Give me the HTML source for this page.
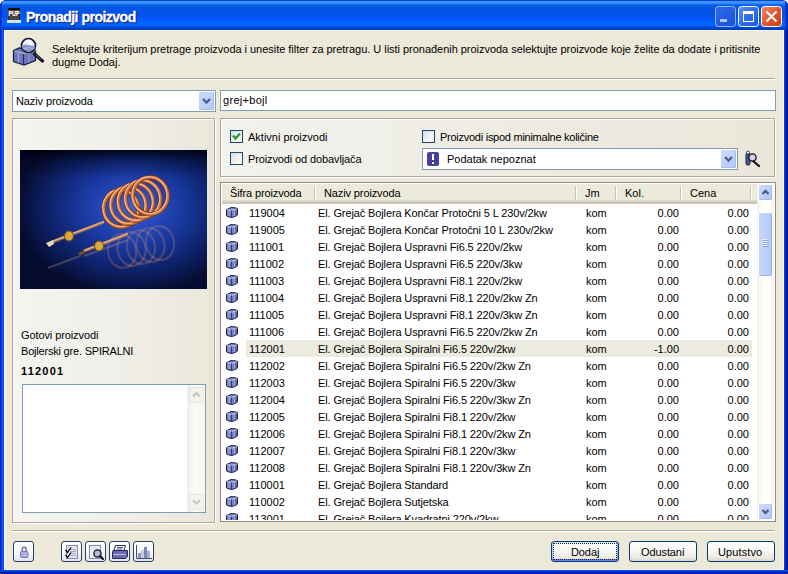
<!DOCTYPE html>
<html><head><meta charset="utf-8">
<style>
*{margin:0;padding:0;box-sizing:border-box}
html,body{width:788px;height:574px;overflow:hidden;background:#fff}
body{font-family:"Liberation Sans",sans-serif;font-size:11px;color:#000;position:relative}
.a{position:absolute}
.t{position:absolute;white-space:nowrap;line-height:13px;font-size:11px}
#win{left:0;top:0;width:788px;height:574px;background:#0842D8;border-radius:6px 6px 0 0;overflow:hidden}
#title{left:0;top:0;width:788px;height:30px;
 background:linear-gradient(to bottom,#0A3FD0 0px,#0A3FD0 1px,#3D95FF 1px,#3D95FF 3px,#0A5FE8 5px,#0055E5 10px,#0851F0 17px,#0062FF 21px,#0066FF 25px,#0050E0 27px,#003DC0 29px,#003AB0 30px)}
#lb{left:0;top:30px;width:4px;height:544px;background:linear-gradient(to right,#0020D0 0,#0020D0 1px,#0838E0 1px,#0838E0 2px,#1060F0 2px,#1060F0 3px,#0848E8 3px)}
#rb{left:784px;top:30px;width:4px;height:544px;background:linear-gradient(to right,#0840E0 0,#0840E0 1px,#0030D0 1px,#0030D0 2px,#0018A0 2px)}
#bb{left:0;top:570px;width:788px;height:4px;background:linear-gradient(to bottom,#0848E8 0,#0848E8 1px,#0838D8 1px,#0838D8 2px,#0020B0 2px)}
#client{left:4px;top:30px;width:780px;height:540px;background:#ECE9D8;border:1px solid #F6F8FC}
.hdr{background:linear-gradient(to bottom,#EBEADB 0,#EBEADB 16px,#E2DECD 16px,#E2DECD 17px,#D6D2C2 17px,#D6D2C2 18px,#CBC7B8 18px)}
.sbtn{border-radius:2px;border:1px solid #FFFFFF;background:linear-gradient(135deg,#CCDAFC 0%,#C0D2FB 50%,#AEC6F8 100%);box-shadow:inset -1px -1px 0 #A6BCEB}
.sthumb{border-radius:2px;border:1px solid #FFFFFF;background:linear-gradient(to right,#C6D6FC,#BDD0FC 50%,#B2C8FA);box-shadow:inset -1px -1px 0 #9CB4EC}
.cb{position:absolute;width:13px;height:13px;border:1px solid #23466A;background:linear-gradient(135deg,#D2DAE6 0%,#EEF0F0 50%,#FFFAF2 100%)}
.btn{position:absolute;height:21px;border:1px solid #003C74;border-radius:3px;background:linear-gradient(to bottom,#FFFFFF 0%,#F6F6F2 50%,#EAE8E0 85%,#D8D2C6 100%)}
.ibtn{position:absolute;width:21px;height:21px;border:1px solid #2B3F5C;border-radius:3px;background:linear-gradient(to bottom,#FFFFFF,#F4F6FA 60%,#DCE6F4)}
.box{position:absolute;border:1px solid #7F9DB9;background:#fff}
</style></head><body>
<div id="win" class="a">
 <div id="title" class="a"></div>
 <div class="a" style="left:0;top:0;width:2px;height:30px;background:linear-gradient(to right,#0028C8,#0848E0)"></div>
 <div class="a" style="left:785px;top:0;width:3px;height:30px;background:linear-gradient(to right,#0848E0,#0020A8)"></div>
 <div id="lb" class="a"></div><div id="rb" class="a"></div><div id="bb" class="a"></div>
 <div id="client" class="a"></div>
</div>
<!-- title -->
<div class="t" style="left:27px;top:10px;font-weight:bold;font-size:14px;letter-spacing:-0.5px;line-height:16px;color:#0A1A6A;-webkit-text-stroke:0.3px #0A1A6A">Pronadji proizvod</div>
<div class="t" style="left:26px;top:9px;font-weight:bold;font-size:14px;letter-spacing:-0.5px;line-height:16px;color:#fff;-webkit-text-stroke:0.3px #fff">Pronadji proizvod</div>
<svg class="a" style="left:0;top:0" width="788" height="30">
 <rect x="8" y="8" width="12" height="13" fill="#2A2622"/>
 <rect x="8" y="8" width="12" height="2" fill="#140C08"/>
 <text x="14" y="15.5" font-family="Liberation Sans" font-weight="bold" font-size="6.5" fill="#fff" text-anchor="middle" stroke="#fff" stroke-width="0.3" textLength="11" lengthAdjust="spacingAndGlyphs">PUP</text>
 <rect x="9" y="16" width="10" height="4" fill="#4A4642"/>
 <rect x="7" y="20" width="14" height="3" fill="#CFE0F8"/>
 <rect x="715.5" y="6.5" width="20" height="20" rx="3" fill="url(#gmin)" stroke="#FFFFFF" stroke-opacity="0.55"/>
 <rect x="720" y="19" width="7" height="3" fill="#A9C4F4"/>
 <rect x="738.5" y="6.5" width="20" height="20" rx="3" fill="url(#gmax)" stroke="#FFFFFF"/>
 <rect x="743.5" y="11.5" width="10" height="10" fill="none" stroke="#fff"/>
 <rect x="743" y="11" width="11" height="3" fill="#fff"/>
 <rect x="761.5" y="6.5" width="20" height="20" rx="3" fill="url(#gcls)" stroke="#FFFFFF"/>
 <path d="M766.5 11.5 L776.5 21.5 M776.5 11.5 L766.5 21.5" stroke="#fff" stroke-width="2"/>
 <defs>
  <linearGradient id="gmin" x1="0" y1="0" x2="1" y2="1"><stop offset="0" stop-color="#2E6BF0"/><stop offset="1" stop-color="#1850D8"/></linearGradient>
  <linearGradient id="gmax" x1="0" y1="0" x2="1" y2="1"><stop offset="0" stop-color="#5A8FF8"/><stop offset="0.5" stop-color="#2E6CF2"/><stop offset="1" stop-color="#1E58E0"/></linearGradient>
  <linearGradient id="gcls" x1="0" y1="0" x2="1" y2="1"><stop offset="0" stop-color="#F08A66"/><stop offset="0.5" stop-color="#E2582E"/><stop offset="1" stop-color="#C43E18"/></linearGradient>
 </defs>
</svg>
<!-- info -->
<svg class="a" style="left:8px;top:34px" width="40" height="36" viewBox="8 34 40 36">
 <path d="M13.5 50.5 L19 48 L24 48.5 L35.5 51 L35.5 60.5 L24 65 L13.5 61.5 Z" fill="#6E76B8" stroke="#1A2048" stroke-width="1.3"/>
 <path d="M14.5 51 L23.5 53.5 L34.5 51" fill="none" stroke="#B4BCE6" stroke-width="1.2"/>
 <path d="M23.5 54 L23.5 64.5" stroke="#242C66" stroke-width="1.2"/>
 <path d="M18.5 52.5 L18.5 62.5" stroke="#9CA6DA" stroke-width="1.3"/>
 <path d="M29 53 L29 62.5" stroke="#8A94CC" stroke-width="1.3"/>
 <path d="M34.5 54 L42.5 61" stroke="#10121E" stroke-width="3.2" stroke-linecap="round"/>
 <path d="M35.5 54.5 L41.5 59.8" stroke="#6A7090" stroke-width="0.9"/>
 <circle cx="28.5" cy="45.5" r="7" fill="#F2F4FC" stroke="#141830" stroke-width="1.7"/>
 <path d="M21.8 46 Q25 43.5 28.5 45 Q32 46.5 35.2 45 L34.6 48.5 Q28.5 54.5 22.4 48.5 Z" fill="#8C96CC"/>
 <path d="M23 48.8 Q28.5 46.5 34 48.8" fill="none" stroke="#B8C0E8" stroke-width="0.8"/>
</svg>
<div class="t" style="left:52px;top:43px;letter-spacing:-0.03px">Selektujte kriterijum pretrage proizvoda i unesite filter za pretragu. U listi pronađenih proizvoda selektujte proizvode koje želite da dodate i pritisnite</div>
<div class="t" style="left:52px;top:56px;">dugme Dodaj.</div>
<div class="a" style="left:12px;top:78px;width:763px;height:1px;background:#ACA899"></div>
<div class="a" style="left:12px;top:79px;width:763px;height:1px;background:#fff"></div>
<!-- combo 1 -->
<div class="box" style="left:12px;top:90px;width:204px;height:22px"></div>
<div class="t" style="left:16px;top:95px;letter-spacing:-0.1px">Naziv proizvoda</div>
<div class="a sbtn" style="left:198px;top:91px;width:17px;height:20px"></div><svg class="a" style="left:0;top:0" width="788" height="574"><path d="M203.0 99.0 L206.5 102.5 L210.0 99.0" fill="none" stroke="#4D6185" stroke-width="2.4"/></svg>
<!-- text input -->
<div class="box" style="left:220px;top:90px;width:556px;height:21px"></div>
<div class="t" style="left:223px;top:94px;letter-spacing:0.3px">grej+bojl</div>
<!-- left panel -->
<div class="a" style="left:12px;top:118px;width:203px;height:405px;border:1px solid #ACA899;box-shadow:1px 1px 0 #FFFFFF,inset 1px 1px 0 #FFFFFF;background:linear-gradient(to right,#F4F4F1 0%,#F0EFE9 50%,#EAE7DA 100%)"></div>
<svg class="a" style="left:20px;top:150px" width="187" height="139" viewBox="0 0 187 139">
 <defs>
  <radialGradient id="bg" cx="0.6" cy="0.42" r="0.62"><stop offset="0" stop-color="#3464DC"/><stop offset="0.25" stop-color="#2448BC"/><stop offset="0.55" stop-color="#14308C"/><stop offset="0.85" stop-color="#0A1850"/><stop offset="1" stop-color="#060C30"/></radialGradient>
  <linearGradient id="topdark" x1="0" y1="0" x2="0" y2="1"><stop offset="0" stop-color="#000010" stop-opacity="0.85"/><stop offset="0.08" stop-color="#000010" stop-opacity="0.3"/><stop offset="0.2" stop-color="#000010" stop-opacity="0"/></linearGradient>
 </defs>
 <rect width="187" height="139" fill="url(#bg)"/>
 <rect width="187" height="139" fill="url(#topdark)"/>
 <g><ellipse cx="102.0" cy="101.0" rx="14" ry="17" transform="rotate(-10 102.0 101.0)" fill="none" stroke="#D89070" stroke-opacity="0.26" stroke-width="2.2"/><ellipse cx="111.5" cy="99.0" rx="14" ry="17" transform="rotate(-10 111.5 99.0)" fill="none" stroke="#D89070" stroke-opacity="0.26" stroke-width="2.2"/><ellipse cx="121.0" cy="97.0" rx="14" ry="17" transform="rotate(-10 121.0 97.0)" fill="none" stroke="#D89070" stroke-opacity="0.26" stroke-width="2.2"/><ellipse cx="130.5" cy="95.0" rx="14" ry="17" transform="rotate(-10 130.5 95.0)" fill="none" stroke="#D89070" stroke-opacity="0.26" stroke-width="2.2"/><ellipse cx="140.0" cy="93.0" rx="14" ry="17" transform="rotate(-10 140.0 93.0)" fill="none" stroke="#D89070" stroke-opacity="0.26" stroke-width="2.2"/></g>
 <path d="M64 106 L108 90" stroke="#C0907A" stroke-opacity="0.35" stroke-width="2"/>
 <path d="M28 118 L60 106" stroke="#B0A080" stroke-opacity="0.3" stroke-width="2"/>
 <path d="M84 72 L32 92" stroke="#A87050" stroke-width="3"/>
 <path d="M84 71.5 L32 91.5" stroke="#E8C0A0" stroke-width="1.2"/>
 <path d="M108 84 L64 101" stroke="#A87050" stroke-width="3"/>
 <path d="M108 83.5 L64 100.5" stroke="#E8C0A0" stroke-width="1.2"/>
 <g><ellipse cx="101.0" cy="58.5" rx="17.5" ry="18.5" transform="rotate(-8 101.0 58.5)" fill="none" stroke="#7A3818" stroke-width="4.4"/><ellipse cx="101.0" cy="58.5" rx="17.5" ry="18.5" transform="rotate(-8 101.0 58.5)" fill="none" stroke="#CC7040" stroke-width="3.0"/><ellipse cx="100.4" cy="57.9" rx="17.5" ry="18.5" transform="rotate(-8 101.0 58.5)" fill="none" stroke="#F8C098" stroke-width="1.1"/><ellipse cx="108.3" cy="55.3" rx="17.5" ry="18.5" transform="rotate(-8 108.3 55.3)" fill="none" stroke="#7A3818" stroke-width="4.4"/><ellipse cx="108.3" cy="55.3" rx="17.5" ry="18.5" transform="rotate(-8 108.3 55.3)" fill="none" stroke="#CC7040" stroke-width="3.0"/><ellipse cx="107.7" cy="54.7" rx="17.5" ry="18.5" transform="rotate(-8 108.3 55.3)" fill="none" stroke="#F8C098" stroke-width="1.1"/><ellipse cx="115.6" cy="52.1" rx="17.5" ry="18.5" transform="rotate(-8 115.6 52.1)" fill="none" stroke="#7A3818" stroke-width="4.4"/><ellipse cx="115.6" cy="52.1" rx="17.5" ry="18.5" transform="rotate(-8 115.6 52.1)" fill="none" stroke="#CC7040" stroke-width="3.0"/><ellipse cx="115.0" cy="51.5" rx="17.5" ry="18.5" transform="rotate(-8 115.6 52.1)" fill="none" stroke="#F8C098" stroke-width="1.1"/><ellipse cx="122.9" cy="48.9" rx="17.5" ry="18.5" transform="rotate(-8 122.9 48.9)" fill="none" stroke="#7A3818" stroke-width="4.4"/><ellipse cx="122.9" cy="48.9" rx="17.5" ry="18.5" transform="rotate(-8 122.9 48.9)" fill="none" stroke="#CC7040" stroke-width="3.0"/><ellipse cx="122.3" cy="48.3" rx="17.5" ry="18.5" transform="rotate(-8 122.9 48.9)" fill="none" stroke="#F8C098" stroke-width="1.1"/><ellipse cx="130.2" cy="45.7" rx="17.5" ry="18.5" transform="rotate(-8 130.2 45.7)" fill="none" stroke="#7A3818" stroke-width="4.4"/><ellipse cx="130.2" cy="45.7" rx="17.5" ry="18.5" transform="rotate(-8 130.2 45.7)" fill="none" stroke="#CC7040" stroke-width="3.0"/><ellipse cx="129.6" cy="45.1" rx="17.5" ry="18.5" transform="rotate(-8 130.2 45.7)" fill="none" stroke="#F8C098" stroke-width="1.1"/></g>
 <ellipse cx="49" cy="86" rx="4.5" ry="5" fill="#D8A838" stroke="#705018"/>
 <ellipse cx="79" cy="96" rx="4.5" ry="5" fill="#D8A838" stroke="#705018"/>
 <path d="M33 90 L26 93 L29 97 L34 94Z" fill="#E8D8B8"/>
 <path d="M64 100 L58 103 L60 106 L65 103Z" fill="#6A5030"/>
</svg>
<div class="t" style="left:21px;top:329px;letter-spacing:-0.1px">Gotovi proizvodi</div>
<div class="t" style="left:21px;top:345px;letter-spacing:-0.2px">Bojlerski gre. SPIRALNI</div>
<div class="t" style="left:21px;top:365px;font-weight:bold;letter-spacing:1.2px">112001</div>
<div class="box" style="left:22px;top:384px;width:184px;height:129px"></div>
<div class="a" style="left:187px;top:385px;width:18px;height:127px;background:linear-gradient(to right,#EEEDE6,#FBFBF8 40%,#F6F5F0)"></div>
<div class="a" style="left:189px;top:387px;width:15px;height:16px;border:1px solid #E6E4DC;border-radius:2px;background:#F4F3EE"></div>
<div class="a" style="left:189px;top:494px;width:15px;height:16px;border:1px solid #E6E4DC;border-radius:2px;background:#F4F3EE"></div>
<svg class="a" style="left:0;top:0" width="788" height="574"><path d="M193 396.5 L196.5 393 L200 396.5" fill="none" stroke="#C8C6BC" stroke-width="2.2"/><path d="M193 500 L196.5 503.5 L200 500" fill="none" stroke="#C8C6BC" stroke-width="2.2"/></svg>
<!-- filter panel -->
<div class="a" style="left:220px;top:118px;width:555px;height:59px;border:1px solid #ACA899;box-shadow:1px 1px 0 #FFFFFF,inset 1px 1px 0 #FFFFFF;background:linear-gradient(to right,#F2F2EE,#EEECE3 50%,#EAE7DA)"></div>
<div class="cb" style="left:230px;top:130px"></div>
<svg class="a" style="left:0;top:0" width="788" height="574"><path d="M233 135.5 L235.5 138.5 L240 133.5" fill="none" stroke="#21A121" stroke-width="2.2"/></svg>
<div class="t" style="left:248px;top:131px;">Aktivni proizvodi</div>
<div class="cb" style="left:230px;top:152px"></div>
<div class="t" style="left:248px;top:153px;letter-spacing:-0.12px">Proizvodi od dobavljača</div>
<div class="cb" style="left:422px;top:130px"></div>
<div class="t" style="left:440px;top:131px;letter-spacing:-0.26px">Proizvodi ispod minimalne količine</div>
<div class="box" style="left:422px;top:148px;width:316px;height:22px"></div>
<svg class="a" style="left:0;top:0" width="788" height="574"><rect x="427" y="152" width="12" height="14" rx="2" fill="#4A3F98"/><rect x="432" y="154" width="2" height="6" fill="#fff"/><rect x="432" y="162" width="2" height="2" fill="#fff"/></svg>
<div class="t" style="left:447px;top:153px;">Podatak nepoznat</div>
<div class="a sbtn" style="left:720px;top:149px;width:17px;height:20px"></div><svg class="a" style="left:0;top:0" width="788" height="574"><path d="M725.0 157.0 L728.5 160.5 L732.0 157.0" fill="none" stroke="#4D6185" stroke-width="2.4"/></svg>
<svg class="a" style="left:744px;top:150px" width="18" height="18" viewBox="744 150 18 18">
 <path d="M752.5 160.5 L759 166" stroke="#101018" stroke-width="2.2" stroke-linecap="round"/>
 <rect x="746" y="153" width="4" height="12" rx="1.5" fill="#4A5890" stroke="#1A2040"/>
 <circle cx="748" cy="152.5" r="1.5" fill="#fff" stroke="#1A2040" stroke-width="0.8"/>
 <circle cx="752.5" cy="157.5" r="3.6" fill="#D8D4EC" stroke="#101018" stroke-width="1.3"/>
</svg>
<!-- grid -->
<div class="a" style="left:220px;top:182px;width:556px;height:340px;border:1px solid #8C8C8A;background:#fff"></div>
<div class="a" style="left:222px;top:184px;width:552px;height:336px;overflow:hidden">
<div class="a hdr" style="left:0;top:0;width:535px;height:20px"></div>
<div class="a" style="left:92px;top:2px;width:1px;height:14px;background:#C7C5B2"></div>
<div class="a" style="left:93px;top:2px;width:1px;height:14px;background:#FFFFFF"></div>
<div class="t" style="left:8px;top:3px;letter-spacing:-0.12px">Šifra proizvoda</div>
<div class="a" style="left:353px;top:2px;width:1px;height:14px;background:#C7C5B2"></div>
<div class="a" style="left:354px;top:2px;width:1px;height:14px;background:#FFFFFF"></div>
<div class="t" style="left:102px;top:3px;letter-spacing:-0.12px">Naziv proizvoda</div>
<div class="a" style="left:393px;top:2px;width:1px;height:14px;background:#C7C5B2"></div>
<div class="a" style="left:394px;top:2px;width:1px;height:14px;background:#FFFFFF"></div>
<div class="t" style="left:363px;top:3px;">Jm</div>
<div class="a" style="left:458px;top:2px;width:1px;height:14px;background:#C7C5B2"></div>
<div class="a" style="left:459px;top:2px;width:1px;height:14px;background:#FFFFFF"></div>
<div class="t" style="left:403px;top:3px;">Kol.</div>
<div class="a" style="left:528px;top:2px;width:1px;height:14px;background:#C7C5B2"></div>
<div class="a" style="left:529px;top:2px;width:1px;height:14px;background:#FFFFFF"></div>
<div class="t" style="left:468px;top:3px;">Cena</div>
<svg class="a" width="13" height="12" viewBox="0 0 13 12" style="left:4px;top:23px"><path d="M0.5 2.5 L3 1.5 L5 0.5 L9 0.8 L11.5 1.5 L11.5 8 L9 9.5 L6 10.5 L3 10 L0.5 9 Z" fill="#7680BC" stroke="#20264E" stroke-width="1"/><path d="M1.2 2.6 L5 3.4 L11 2" fill="none" stroke="#C4CCF0" stroke-width="1"/><path d="M5.5 3.5 L5.5 10" stroke="#363C78" stroke-width="1"/><path d="M3 3.5 L3 9" stroke="#A8B2E0" stroke-width="1"/><path d="M8.5 3.2 L8.5 9" stroke="#9AA6DC" stroke-width="1"/><path d="M10.2 2.5 L10.2 8" stroke="#3A4486" stroke-width="0.8"/></svg>
<div class="t" style="left:27px;top:23px;">119004</div>
<div class="t" style="left:96px;top:23px;letter-spacing:-0.12px">El. Grejač Bojlera Končar Protočni 5 L 230v/2kw</div>
<div class="t" style="left:364px;top:23px;">kom</div>
<div class="t" style="left:397px;width:60px;text-align:right;top:23px">0.00</div>
<div class="t" style="left:467px;width:60px;text-align:right;top:23px">0.00</div>
<svg class="a" width="13" height="12" viewBox="0 0 13 12" style="left:4px;top:40px"><path d="M0.5 2.5 L3 1.5 L5 0.5 L9 0.8 L11.5 1.5 L11.5 8 L9 9.5 L6 10.5 L3 10 L0.5 9 Z" fill="#7680BC" stroke="#20264E" stroke-width="1"/><path d="M1.2 2.6 L5 3.4 L11 2" fill="none" stroke="#C4CCF0" stroke-width="1"/><path d="M5.5 3.5 L5.5 10" stroke="#363C78" stroke-width="1"/><path d="M3 3.5 L3 9" stroke="#A8B2E0" stroke-width="1"/><path d="M8.5 3.2 L8.5 9" stroke="#9AA6DC" stroke-width="1"/><path d="M10.2 2.5 L10.2 8" stroke="#3A4486" stroke-width="0.8"/></svg>
<div class="t" style="left:27px;top:40px;">119005</div>
<div class="t" style="left:96px;top:40px;letter-spacing:-0.12px">El. Grejač Bojlera Končar Protočni 10 L 230v/2kw</div>
<div class="t" style="left:364px;top:40px;">kom</div>
<div class="t" style="left:397px;width:60px;text-align:right;top:40px">0.00</div>
<div class="t" style="left:467px;width:60px;text-align:right;top:40px">0.00</div>
<svg class="a" width="13" height="12" viewBox="0 0 13 12" style="left:4px;top:57px"><path d="M0.5 2.5 L3 1.5 L5 0.5 L9 0.8 L11.5 1.5 L11.5 8 L9 9.5 L6 10.5 L3 10 L0.5 9 Z" fill="#7680BC" stroke="#20264E" stroke-width="1"/><path d="M1.2 2.6 L5 3.4 L11 2" fill="none" stroke="#C4CCF0" stroke-width="1"/><path d="M5.5 3.5 L5.5 10" stroke="#363C78" stroke-width="1"/><path d="M3 3.5 L3 9" stroke="#A8B2E0" stroke-width="1"/><path d="M8.5 3.2 L8.5 9" stroke="#9AA6DC" stroke-width="1"/><path d="M10.2 2.5 L10.2 8" stroke="#3A4486" stroke-width="0.8"/></svg>
<div class="t" style="left:27px;top:57px;">111001</div>
<div class="t" style="left:96px;top:57px;letter-spacing:-0.12px">El. Grejač Bojlera Uspravni Fi6.5 220v/2kw</div>
<div class="t" style="left:364px;top:57px;">kom</div>
<div class="t" style="left:397px;width:60px;text-align:right;top:57px">0.00</div>
<div class="t" style="left:467px;width:60px;text-align:right;top:57px">0.00</div>
<svg class="a" width="13" height="12" viewBox="0 0 13 12" style="left:4px;top:74px"><path d="M0.5 2.5 L3 1.5 L5 0.5 L9 0.8 L11.5 1.5 L11.5 8 L9 9.5 L6 10.5 L3 10 L0.5 9 Z" fill="#7680BC" stroke="#20264E" stroke-width="1"/><path d="M1.2 2.6 L5 3.4 L11 2" fill="none" stroke="#C4CCF0" stroke-width="1"/><path d="M5.5 3.5 L5.5 10" stroke="#363C78" stroke-width="1"/><path d="M3 3.5 L3 9" stroke="#A8B2E0" stroke-width="1"/><path d="M8.5 3.2 L8.5 9" stroke="#9AA6DC" stroke-width="1"/><path d="M10.2 2.5 L10.2 8" stroke="#3A4486" stroke-width="0.8"/></svg>
<div class="t" style="left:27px;top:74px;">111002</div>
<div class="t" style="left:96px;top:74px;letter-spacing:-0.12px">El. Grejač Bojlera Uspravni Fi6.5 220v/3kw</div>
<div class="t" style="left:364px;top:74px;">kom</div>
<div class="t" style="left:397px;width:60px;text-align:right;top:74px">0.00</div>
<div class="t" style="left:467px;width:60px;text-align:right;top:74px">0.00</div>
<svg class="a" width="13" height="12" viewBox="0 0 13 12" style="left:4px;top:91px"><path d="M0.5 2.5 L3 1.5 L5 0.5 L9 0.8 L11.5 1.5 L11.5 8 L9 9.5 L6 10.5 L3 10 L0.5 9 Z" fill="#7680BC" stroke="#20264E" stroke-width="1"/><path d="M1.2 2.6 L5 3.4 L11 2" fill="none" stroke="#C4CCF0" stroke-width="1"/><path d="M5.5 3.5 L5.5 10" stroke="#363C78" stroke-width="1"/><path d="M3 3.5 L3 9" stroke="#A8B2E0" stroke-width="1"/><path d="M8.5 3.2 L8.5 9" stroke="#9AA6DC" stroke-width="1"/><path d="M10.2 2.5 L10.2 8" stroke="#3A4486" stroke-width="0.8"/></svg>
<div class="t" style="left:27px;top:91px;">111003</div>
<div class="t" style="left:96px;top:91px;letter-spacing:-0.12px">El. Grejač Bojlera Uspravni Fi8.1 220v/2kw</div>
<div class="t" style="left:364px;top:91px;">kom</div>
<div class="t" style="left:397px;width:60px;text-align:right;top:91px">0.00</div>
<div class="t" style="left:467px;width:60px;text-align:right;top:91px">0.00</div>
<svg class="a" width="13" height="12" viewBox="0 0 13 12" style="left:4px;top:108px"><path d="M0.5 2.5 L3 1.5 L5 0.5 L9 0.8 L11.5 1.5 L11.5 8 L9 9.5 L6 10.5 L3 10 L0.5 9 Z" fill="#7680BC" stroke="#20264E" stroke-width="1"/><path d="M1.2 2.6 L5 3.4 L11 2" fill="none" stroke="#C4CCF0" stroke-width="1"/><path d="M5.5 3.5 L5.5 10" stroke="#363C78" stroke-width="1"/><path d="M3 3.5 L3 9" stroke="#A8B2E0" stroke-width="1"/><path d="M8.5 3.2 L8.5 9" stroke="#9AA6DC" stroke-width="1"/><path d="M10.2 2.5 L10.2 8" stroke="#3A4486" stroke-width="0.8"/></svg>
<div class="t" style="left:27px;top:108px;">111004</div>
<div class="t" style="left:96px;top:108px;letter-spacing:-0.12px">El. Grejač Bojlera Uspravni Fi8.1 220v/2kw Zn</div>
<div class="t" style="left:364px;top:108px;">kom</div>
<div class="t" style="left:397px;width:60px;text-align:right;top:108px">0.00</div>
<div class="t" style="left:467px;width:60px;text-align:right;top:108px">0.00</div>
<svg class="a" width="13" height="12" viewBox="0 0 13 12" style="left:4px;top:125px"><path d="M0.5 2.5 L3 1.5 L5 0.5 L9 0.8 L11.5 1.5 L11.5 8 L9 9.5 L6 10.5 L3 10 L0.5 9 Z" fill="#7680BC" stroke="#20264E" stroke-width="1"/><path d="M1.2 2.6 L5 3.4 L11 2" fill="none" stroke="#C4CCF0" stroke-width="1"/><path d="M5.5 3.5 L5.5 10" stroke="#363C78" stroke-width="1"/><path d="M3 3.5 L3 9" stroke="#A8B2E0" stroke-width="1"/><path d="M8.5 3.2 L8.5 9" stroke="#9AA6DC" stroke-width="1"/><path d="M10.2 2.5 L10.2 8" stroke="#3A4486" stroke-width="0.8"/></svg>
<div class="t" style="left:27px;top:125px;">111005</div>
<div class="t" style="left:96px;top:125px;letter-spacing:-0.12px">El. Grejač Bojlera Uspravni Fi8.1 220v/3kw Zn</div>
<div class="t" style="left:364px;top:125px;">kom</div>
<div class="t" style="left:397px;width:60px;text-align:right;top:125px">0.00</div>
<div class="t" style="left:467px;width:60px;text-align:right;top:125px">0.00</div>
<svg class="a" width="13" height="12" viewBox="0 0 13 12" style="left:4px;top:142px"><path d="M0.5 2.5 L3 1.5 L5 0.5 L9 0.8 L11.5 1.5 L11.5 8 L9 9.5 L6 10.5 L3 10 L0.5 9 Z" fill="#7680BC" stroke="#20264E" stroke-width="1"/><path d="M1.2 2.6 L5 3.4 L11 2" fill="none" stroke="#C4CCF0" stroke-width="1"/><path d="M5.5 3.5 L5.5 10" stroke="#363C78" stroke-width="1"/><path d="M3 3.5 L3 9" stroke="#A8B2E0" stroke-width="1"/><path d="M8.5 3.2 L8.5 9" stroke="#9AA6DC" stroke-width="1"/><path d="M10.2 2.5 L10.2 8" stroke="#3A4486" stroke-width="0.8"/></svg>
<div class="t" style="left:27px;top:142px;">111006</div>
<div class="t" style="left:96px;top:142px;letter-spacing:-0.12px">El. Grejač Bojlera Uspravni Fi6.5 220v/2kw Zn</div>
<div class="t" style="left:364px;top:142px;">kom</div>
<div class="t" style="left:397px;width:60px;text-align:right;top:142px">0.00</div>
<div class="t" style="left:467px;width:60px;text-align:right;top:142px">0.00</div>
<div class="a" style="left:24px;top:156px;width:506px;height:17px;background:#EDEBE0"></div>
<svg class="a" width="13" height="12" viewBox="0 0 13 12" style="left:4px;top:159px"><path d="M0.5 2.5 L3 1.5 L5 0.5 L9 0.8 L11.5 1.5 L11.5 8 L9 9.5 L6 10.5 L3 10 L0.5 9 Z" fill="#7680BC" stroke="#20264E" stroke-width="1"/><path d="M1.2 2.6 L5 3.4 L11 2" fill="none" stroke="#C4CCF0" stroke-width="1"/><path d="M5.5 3.5 L5.5 10" stroke="#363C78" stroke-width="1"/><path d="M3 3.5 L3 9" stroke="#A8B2E0" stroke-width="1"/><path d="M8.5 3.2 L8.5 9" stroke="#9AA6DC" stroke-width="1"/><path d="M10.2 2.5 L10.2 8" stroke="#3A4486" stroke-width="0.8"/></svg>
<div class="t" style="left:27px;top:159px;">112001</div>
<div class="t" style="left:96px;top:159px;letter-spacing:-0.12px">El. Grejač Bojlera Spiralni Fi6.5 220v/2kw</div>
<div class="t" style="left:364px;top:159px;">kom</div>
<div class="t" style="left:397px;width:60px;text-align:right;top:159px">-1.00</div>
<div class="t" style="left:467px;width:60px;text-align:right;top:159px">0.00</div>
<svg class="a" width="13" height="12" viewBox="0 0 13 12" style="left:4px;top:176px"><path d="M0.5 2.5 L3 1.5 L5 0.5 L9 0.8 L11.5 1.5 L11.5 8 L9 9.5 L6 10.5 L3 10 L0.5 9 Z" fill="#7680BC" stroke="#20264E" stroke-width="1"/><path d="M1.2 2.6 L5 3.4 L11 2" fill="none" stroke="#C4CCF0" stroke-width="1"/><path d="M5.5 3.5 L5.5 10" stroke="#363C78" stroke-width="1"/><path d="M3 3.5 L3 9" stroke="#A8B2E0" stroke-width="1"/><path d="M8.5 3.2 L8.5 9" stroke="#9AA6DC" stroke-width="1"/><path d="M10.2 2.5 L10.2 8" stroke="#3A4486" stroke-width="0.8"/></svg>
<div class="t" style="left:27px;top:176px;">112002</div>
<div class="t" style="left:96px;top:176px;letter-spacing:-0.12px">El. Grejač Bojlera Spiralni Fi6.5 220v/2kw Zn</div>
<div class="t" style="left:364px;top:176px;">kom</div>
<div class="t" style="left:397px;width:60px;text-align:right;top:176px">0.00</div>
<div class="t" style="left:467px;width:60px;text-align:right;top:176px">0.00</div>
<svg class="a" width="13" height="12" viewBox="0 0 13 12" style="left:4px;top:193px"><path d="M0.5 2.5 L3 1.5 L5 0.5 L9 0.8 L11.5 1.5 L11.5 8 L9 9.5 L6 10.5 L3 10 L0.5 9 Z" fill="#7680BC" stroke="#20264E" stroke-width="1"/><path d="M1.2 2.6 L5 3.4 L11 2" fill="none" stroke="#C4CCF0" stroke-width="1"/><path d="M5.5 3.5 L5.5 10" stroke="#363C78" stroke-width="1"/><path d="M3 3.5 L3 9" stroke="#A8B2E0" stroke-width="1"/><path d="M8.5 3.2 L8.5 9" stroke="#9AA6DC" stroke-width="1"/><path d="M10.2 2.5 L10.2 8" stroke="#3A4486" stroke-width="0.8"/></svg>
<div class="t" style="left:27px;top:193px;">112003</div>
<div class="t" style="left:96px;top:193px;letter-spacing:-0.12px">El. Grejač Bojlera Spiralni Fi6.5 220v/3kw</div>
<div class="t" style="left:364px;top:193px;">kom</div>
<div class="t" style="left:397px;width:60px;text-align:right;top:193px">0.00</div>
<div class="t" style="left:467px;width:60px;text-align:right;top:193px">0.00</div>
<svg class="a" width="13" height="12" viewBox="0 0 13 12" style="left:4px;top:210px"><path d="M0.5 2.5 L3 1.5 L5 0.5 L9 0.8 L11.5 1.5 L11.5 8 L9 9.5 L6 10.5 L3 10 L0.5 9 Z" fill="#7680BC" stroke="#20264E" stroke-width="1"/><path d="M1.2 2.6 L5 3.4 L11 2" fill="none" stroke="#C4CCF0" stroke-width="1"/><path d="M5.5 3.5 L5.5 10" stroke="#363C78" stroke-width="1"/><path d="M3 3.5 L3 9" stroke="#A8B2E0" stroke-width="1"/><path d="M8.5 3.2 L8.5 9" stroke="#9AA6DC" stroke-width="1"/><path d="M10.2 2.5 L10.2 8" stroke="#3A4486" stroke-width="0.8"/></svg>
<div class="t" style="left:27px;top:210px;">112004</div>
<div class="t" style="left:96px;top:210px;letter-spacing:-0.12px">El. Grejač Bojlera Spiralni Fi6.5 220v/3kw Zn</div>
<div class="t" style="left:364px;top:210px;">kom</div>
<div class="t" style="left:397px;width:60px;text-align:right;top:210px">0.00</div>
<div class="t" style="left:467px;width:60px;text-align:right;top:210px">0.00</div>
<svg class="a" width="13" height="12" viewBox="0 0 13 12" style="left:4px;top:227px"><path d="M0.5 2.5 L3 1.5 L5 0.5 L9 0.8 L11.5 1.5 L11.5 8 L9 9.5 L6 10.5 L3 10 L0.5 9 Z" fill="#7680BC" stroke="#20264E" stroke-width="1"/><path d="M1.2 2.6 L5 3.4 L11 2" fill="none" stroke="#C4CCF0" stroke-width="1"/><path d="M5.5 3.5 L5.5 10" stroke="#363C78" stroke-width="1"/><path d="M3 3.5 L3 9" stroke="#A8B2E0" stroke-width="1"/><path d="M8.5 3.2 L8.5 9" stroke="#9AA6DC" stroke-width="1"/><path d="M10.2 2.5 L10.2 8" stroke="#3A4486" stroke-width="0.8"/></svg>
<div class="t" style="left:27px;top:227px;">112005</div>
<div class="t" style="left:96px;top:227px;letter-spacing:-0.12px">El. Grejač Bojlera Spiralni Fi8.1 220v/2kw</div>
<div class="t" style="left:364px;top:227px;">kom</div>
<div class="t" style="left:397px;width:60px;text-align:right;top:227px">0.00</div>
<div class="t" style="left:467px;width:60px;text-align:right;top:227px">0.00</div>
<svg class="a" width="13" height="12" viewBox="0 0 13 12" style="left:4px;top:244px"><path d="M0.5 2.5 L3 1.5 L5 0.5 L9 0.8 L11.5 1.5 L11.5 8 L9 9.5 L6 10.5 L3 10 L0.5 9 Z" fill="#7680BC" stroke="#20264E" stroke-width="1"/><path d="M1.2 2.6 L5 3.4 L11 2" fill="none" stroke="#C4CCF0" stroke-width="1"/><path d="M5.5 3.5 L5.5 10" stroke="#363C78" stroke-width="1"/><path d="M3 3.5 L3 9" stroke="#A8B2E0" stroke-width="1"/><path d="M8.5 3.2 L8.5 9" stroke="#9AA6DC" stroke-width="1"/><path d="M10.2 2.5 L10.2 8" stroke="#3A4486" stroke-width="0.8"/></svg>
<div class="t" style="left:27px;top:244px;">112006</div>
<div class="t" style="left:96px;top:244px;letter-spacing:-0.12px">El. Grejač Bojlera Spiralni Fi8.1 220v/2kw Zn</div>
<div class="t" style="left:364px;top:244px;">kom</div>
<div class="t" style="left:397px;width:60px;text-align:right;top:244px">0.00</div>
<div class="t" style="left:467px;width:60px;text-align:right;top:244px">0.00</div>
<svg class="a" width="13" height="12" viewBox="0 0 13 12" style="left:4px;top:261px"><path d="M0.5 2.5 L3 1.5 L5 0.5 L9 0.8 L11.5 1.5 L11.5 8 L9 9.5 L6 10.5 L3 10 L0.5 9 Z" fill="#7680BC" stroke="#20264E" stroke-width="1"/><path d="M1.2 2.6 L5 3.4 L11 2" fill="none" stroke="#C4CCF0" stroke-width="1"/><path d="M5.5 3.5 L5.5 10" stroke="#363C78" stroke-width="1"/><path d="M3 3.5 L3 9" stroke="#A8B2E0" stroke-width="1"/><path d="M8.5 3.2 L8.5 9" stroke="#9AA6DC" stroke-width="1"/><path d="M10.2 2.5 L10.2 8" stroke="#3A4486" stroke-width="0.8"/></svg>
<div class="t" style="left:27px;top:261px;">112007</div>
<div class="t" style="left:96px;top:261px;letter-spacing:-0.12px">El. Grejač Bojlera Spiralni Fi8.1 220v/3kw</div>
<div class="t" style="left:364px;top:261px;">kom</div>
<div class="t" style="left:397px;width:60px;text-align:right;top:261px">0.00</div>
<div class="t" style="left:467px;width:60px;text-align:right;top:261px">0.00</div>
<svg class="a" width="13" height="12" viewBox="0 0 13 12" style="left:4px;top:278px"><path d="M0.5 2.5 L3 1.5 L5 0.5 L9 0.8 L11.5 1.5 L11.5 8 L9 9.5 L6 10.5 L3 10 L0.5 9 Z" fill="#7680BC" stroke="#20264E" stroke-width="1"/><path d="M1.2 2.6 L5 3.4 L11 2" fill="none" stroke="#C4CCF0" stroke-width="1"/><path d="M5.5 3.5 L5.5 10" stroke="#363C78" stroke-width="1"/><path d="M3 3.5 L3 9" stroke="#A8B2E0" stroke-width="1"/><path d="M8.5 3.2 L8.5 9" stroke="#9AA6DC" stroke-width="1"/><path d="M10.2 2.5 L10.2 8" stroke="#3A4486" stroke-width="0.8"/></svg>
<div class="t" style="left:27px;top:278px;">112008</div>
<div class="t" style="left:96px;top:278px;letter-spacing:-0.12px">El. Grejač Bojlera Spiralni Fi8.1 220v/3kw Zn</div>
<div class="t" style="left:364px;top:278px;">kom</div>
<div class="t" style="left:397px;width:60px;text-align:right;top:278px">0.00</div>
<div class="t" style="left:467px;width:60px;text-align:right;top:278px">0.00</div>
<svg class="a" width="13" height="12" viewBox="0 0 13 12" style="left:4px;top:295px"><path d="M0.5 2.5 L3 1.5 L5 0.5 L9 0.8 L11.5 1.5 L11.5 8 L9 9.5 L6 10.5 L3 10 L0.5 9 Z" fill="#7680BC" stroke="#20264E" stroke-width="1"/><path d="M1.2 2.6 L5 3.4 L11 2" fill="none" stroke="#C4CCF0" stroke-width="1"/><path d="M5.5 3.5 L5.5 10" stroke="#363C78" stroke-width="1"/><path d="M3 3.5 L3 9" stroke="#A8B2E0" stroke-width="1"/><path d="M8.5 3.2 L8.5 9" stroke="#9AA6DC" stroke-width="1"/><path d="M10.2 2.5 L10.2 8" stroke="#3A4486" stroke-width="0.8"/></svg>
<div class="t" style="left:27px;top:295px;">110001</div>
<div class="t" style="left:96px;top:295px;letter-spacing:-0.12px">El. Grejač Bojlera Standard</div>
<div class="t" style="left:364px;top:295px;">kom</div>
<div class="t" style="left:397px;width:60px;text-align:right;top:295px">0.00</div>
<div class="t" style="left:467px;width:60px;text-align:right;top:295px">0.00</div>
<svg class="a" width="13" height="12" viewBox="0 0 13 12" style="left:4px;top:312px"><path d="M0.5 2.5 L3 1.5 L5 0.5 L9 0.8 L11.5 1.5 L11.5 8 L9 9.5 L6 10.5 L3 10 L0.5 9 Z" fill="#7680BC" stroke="#20264E" stroke-width="1"/><path d="M1.2 2.6 L5 3.4 L11 2" fill="none" stroke="#C4CCF0" stroke-width="1"/><path d="M5.5 3.5 L5.5 10" stroke="#363C78" stroke-width="1"/><path d="M3 3.5 L3 9" stroke="#A8B2E0" stroke-width="1"/><path d="M8.5 3.2 L8.5 9" stroke="#9AA6DC" stroke-width="1"/><path d="M10.2 2.5 L10.2 8" stroke="#3A4486" stroke-width="0.8"/></svg>
<div class="t" style="left:27px;top:312px;">110002</div>
<div class="t" style="left:96px;top:312px;letter-spacing:-0.12px">El. Grejač Bojlera Sutjetska</div>
<div class="t" style="left:364px;top:312px;">kom</div>
<div class="t" style="left:397px;width:60px;text-align:right;top:312px">0.00</div>
<div class="t" style="left:467px;width:60px;text-align:right;top:312px">0.00</div>
<svg class="a" width="13" height="12" viewBox="0 0 13 12" style="left:4px;top:329px"><path d="M0.5 2.5 L3 1.5 L5 0.5 L9 0.8 L11.5 1.5 L11.5 8 L9 9.5 L6 10.5 L3 10 L0.5 9 Z" fill="#7680BC" stroke="#20264E" stroke-width="1"/><path d="M1.2 2.6 L5 3.4 L11 2" fill="none" stroke="#C4CCF0" stroke-width="1"/><path d="M5.5 3.5 L5.5 10" stroke="#363C78" stroke-width="1"/><path d="M3 3.5 L3 9" stroke="#A8B2E0" stroke-width="1"/><path d="M8.5 3.2 L8.5 9" stroke="#9AA6DC" stroke-width="1"/><path d="M10.2 2.5 L10.2 8" stroke="#3A4486" stroke-width="0.8"/></svg>
<div class="t" style="left:27px;top:329px;">113001</div>
<div class="t" style="left:96px;top:329px;letter-spacing:-0.12px">El. Grejač Bojlera Kvadratni 220v/2kw</div>
<div class="t" style="left:364px;top:329px;">kom</div>
<div class="t" style="left:397px;width:60px;text-align:right;top:329px">0.00</div>
<div class="t" style="left:467px;width:60px;text-align:right;top:329px">0.00</div>
</div>
<div class="a" style="left:757px;top:184px;width:17px;height:336px;background:linear-gradient(to right,#F3F1EC,#FEFEFB 40%,#FEFEFB 80%,#F0EFEA)"></div>
<div class="a sbtn" style="left:758px;top:184px;width:15px;height:17px"></div><svg class="a" style="left:0;top:0" width="788" height="574"><path d="M762.5 194.0 L765.5 191.0 L768.5 194.0" fill="none" stroke="#4D6185" stroke-width="2.4"/></svg>
<div class="a sthumb" style="left:758px;top:212px;width:15px;height:65px"></div>
<svg class="a" style="left:0;top:0" width="788" height="574"><path d="M761.5 239.5h6" stroke="#EEF4FE"/><path d="M762.5 240.5h6" stroke="#8CA8E8"/><path d="M761.5 241.5h6" stroke="#EEF4FE"/><path d="M762.5 242.5h6" stroke="#8CA8E8"/><path d="M761.5 243.5h6" stroke="#EEF4FE"/><path d="M762.5 244.5h6" stroke="#8CA8E8"/><path d="M761.5 245.5h6" stroke="#EEF4FE"/><path d="M762.5 246.5h6" stroke="#8CA8E8"/></svg>
<div class="a sbtn" style="left:758px;top:503px;width:15px;height:17px"></div><svg class="a" style="left:0;top:0" width="788" height="574"><path d="M762.5 510.0 L765.5 513.0 L768.5 510.0" fill="none" stroke="#4D6185" stroke-width="2.4"/></svg>
<!-- bottom sep -->
<div class="a" style="left:12px;top:530px;width:763px;height:1px;background:#ACA899"></div>
<div class="a" style="left:12px;top:531px;width:763px;height:1px;background:#fff"></div>
<!-- icon buttons -->
<div class="ibtn" style="left:13px;top:541px"></div>
<div class="ibtn" style="left:61px;top:541px"></div>
<div class="ibtn" style="left:85px;top:541px"></div>
<div class="ibtn" style="left:109px;top:541px"></div>
<div class="ibtn" style="left:133px;top:541px"></div>
<svg class="a" style="left:0;top:530px" width="200" height="44" viewBox="0 530 200 44">
 <!-- lock -->
 <path d="M22.2 552 L22.2 549.5 Q22.2 547.2 24.2 547.2 Q26.2 547.2 26.2 549.5 L26.2 552" fill="none" stroke="#6A64A0" stroke-width="1.3"/>
 <rect x="20.5" y="551.5" width="7.5" height="6" rx="1" fill="#B4AEDA" stroke="#7E78B4" stroke-width="1"/>
 <!-- checklist -->
 <rect x="66.5" y="545.5" width="11" height="13" fill="#E4E2F2" stroke="#8A88B0"/>
 <path d="M70 549.5h6 M70 551.5h6 M70 553.5h6 M70 555.5h6" stroke="#A8A6CC" stroke-width="1"/>
 <path d="M65.5 550 L67.5 552.5 L71 547.5 M65.5 555 L67.5 557.5 L71 552.5" fill="none" stroke="#000" stroke-width="1.3"/>
 <!-- preview -->
 <rect x="89.5" y="545.5" width="11" height="13" fill="#ECEAF4" stroke="#8A88B0"/>
 <circle cx="97.5" cy="553.5" r="3.6" fill="#B8B4DC" stroke="#101018" stroke-width="1.3"/>
 <path d="M100 556 L103 559" stroke="#000" stroke-width="2" stroke-linecap="round"/>
 <!-- printer -->
 <path d="M115.5 545.5 L125.5 545.5 L124 550.5 L114 550.5Z" fill="#fff" stroke="#2A2A5A"/>
 <path d="M117 547.5h6 M116.5 549h6" stroke="#2A2A5A" stroke-width="0.8"/>
 <path d="M113 550.5 L127.5 550.5 L127.5 556.5 L125.5 558.5 L112.5 558.5 L112.5 553Z" fill="#6A6AB0" stroke="#2A2A5A"/>
 <path d="M113.5 554.5h12" stroke="#B8B8E8" stroke-width="1.2"/>
 <!-- chart -->
 <path d="M136.5 545 L136.5 558.5 L152 558.5" fill="none" stroke="#4A4868" stroke-width="1"/>
 <rect x="138" y="553" width="3" height="5" fill="#8A96C0"/>
 <rect x="141" y="550" width="3" height="8" fill="#C8CEE8"/>
 <rect x="144" y="547" width="3" height="11" fill="#7A88B8"/>
 <rect x="147" y="551" width="3" height="7" fill="#A8B2D8"/>
</svg>
<!-- text buttons -->
<div class="btn" style="left:551px;top:541px;width:68px;box-shadow:inset 0 1px 0 #CEE7FF,inset 0 -2px 0 #6982EE,inset 1px 0 0 #B8D2F8,inset -1px 0 0 #8AA8F0"></div>
<div class="a" style="left:553px;top:543px;width:64px;height:17px;border:1px dotted #202040"></div>
<div class="t" style="left:571px;top:546px;letter-spacing:-0.1px">Dodaj</div>
<div class="btn" style="left:629px;top:541px;width:68px"></div>
<div class="t" style="left:641px;top:546px;letter-spacing:-0.1px">Odustani</div>
<div class="btn" style="left:707px;top:541px;width:68px"></div>
<div class="t" style="left:718px;top:546px;letter-spacing:0.1px">Uputstvo</div>
</body></html>
